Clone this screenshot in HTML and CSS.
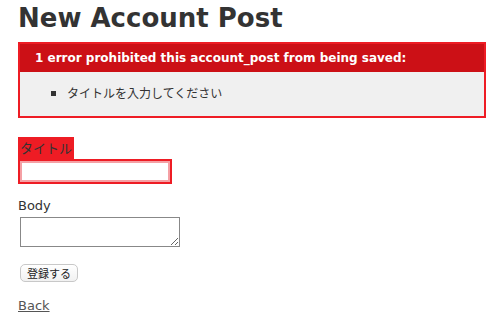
FILE: index.html
```html
<!DOCTYPE html>
<html lang="ja">
<head>
<meta charset="utf-8">
<title>New Account Post</title>
<link rel="stylesheet" href="styles.css">
</head>
<body>
<h1 class="title">New Account Post</h1>
<form class="post-form">
  <div class="error-explanation">
    <h2 class="error-head">1 error prohibited this account_post from being saved:</h2>
    <ul class="error-list">
      <li>タイトルを入力してください</li>
    </ul>
  </div>
  <div class="field">
    <div class="field-with-errors"><label class="label">タイトル</label></div>
    <div class="field-with-errors"><input class="text-input" type="text"></div>
  </div>
  <div class="field field-body">
    <label class="label">Body</label>
    <textarea class="textarea"></textarea>
  </div>
  <div class="actions">
    <button class="submit" type="button">登録する</button>
  </div>
</form>
<a class="back" href="#">Back</a>
</body>
</html>
```

FILE: styles.css
```css
html, body {
  margin: 0;
  padding: 0;
  background: #fff;
}
body {
  padding: 0 18px;
  color: #333;
  font-family: "DejaVu Sans", Verdana, "Noto Sans CJK JP", sans-serif;
  font-size: 13px;
  line-height: 18px;
}
.title {
  margin: 0;
  padding-top: 2px;
  font-size: 26px;
  line-height: 32px;
  font-weight: bold;
  color: #333;
}
.post-form {
  margin: 8px 0 0;
}
.error-explanation {
  width: 450px;
  border: 2px solid #ee1c24;
  padding: 7px 7px 0;
  background-color: #f0f0f0;
  margin-bottom: 19px;
}
.error-head {
  margin: -7px -7px 0;
  padding: 5px 5px 5px 15px;
  background-color: #cc1016;
  color: #fff;
  font-size: 12px;
  line-height: 18px;
  font-weight: bold;
}
.error-list {
  margin: 12px 0 14px;
  padding-left: 40px;
}
.error-list li {
  list-style: square;
  font-size: 12px;
  line-height: 18px;
  font-family: "Noto Sans CJK JP", sans-serif;
}
.field-with-errors {
  display: table;
  padding: 2px;
  background-color: #ee1c24;
}
.field-with-errors .label {
  display: block;
  color: #333;
  font-family: "Noto Sans CJK JP", sans-serif;
  font-size: 13px;
  line-height: 18px;
}
.text-input {
  display: block;
  width: 142px;
  height: 17px;
  margin: 0;
  padding: 0 2px;
  border: 2px solid #f5a0a4;
  background: #fff;
  outline: none;
}
.field-body {
  margin-top: 13px;
}
.field-body .label {
  display: block;
}
.textarea {
  display: block;
  margin: 2px 0 0 2px;
  width: 156px;
  height: 26px;
  padding: 1px;
  border: 1px solid #888;
  resize: both;
}
.actions {
  margin-top: 17px;
}
.submit {
  margin-left: 2px;
  height: 18px;
  padding: 0 6px;
  border: 1px solid #c8c8c8;
  border-radius: 5px;
  background: linear-gradient(#fff, #f1f1f1);
  font-family: "Noto Sans CJK JP", sans-serif;
  font-size: 11px;
  line-height: 16px;
  color: #222;
}
.back {
  display: inline-block;
  margin-top: 14px;
  color: #555;
  font-size: 13px;
  text-decoration: underline;
}
```
